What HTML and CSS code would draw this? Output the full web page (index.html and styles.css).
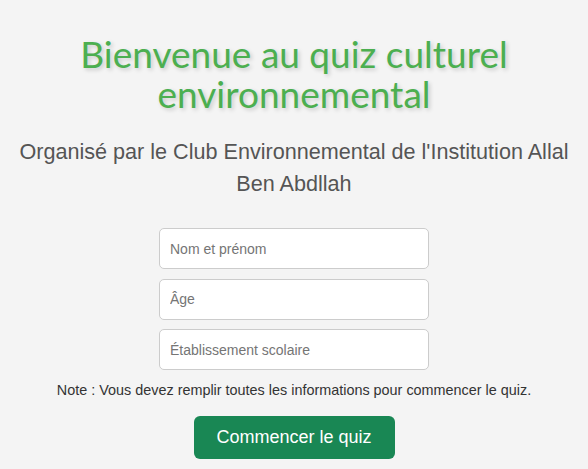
FILE: index.html
```html
<!DOCTYPE html>
<html lang="fr">
<head>
<meta charset="utf-8">
<title>Quiz culturel environnemental</title>
<link rel="stylesheet" href="styles.css">
</head>
<body>
<main class="page">
  <h1 class="title">Bienvenue au quiz culturel environnemental</h1>
  <p class="subtitle">Organisé par le Club Environnemental de l'Institution Allal Ben Abdllah</p>
  <form class="form">
    <input class="field" type="text" placeholder="Nom et prénom">
    <input class="field" type="text" placeholder="Âge">
    <input class="field" type="text" placeholder="Établissement scolaire">
    <p class="note">Note : Vous devez remplir toutes les informations pour commencer le quiz.</p>
    <button class="start" type="button">Commencer le quiz</button>
  </form>
</main>
</body>
</html>
```

FILE: styles.css
```css
html, body {
  margin: 0;
  padding: 0;
  background: #f4f4f4;
}
body {
  font-family: "Liberation Sans", Arial, sans-serif;
  color: #333;
}
.page {
  display: flex;
  flex-direction: column;
  align-items: center;
  padding: 34px 8px 0;
  text-align: center;
}
.title {
  margin: 0;
  font-family: Lato, "Open Sans", sans-serif;
  font-weight: 400;
  font-size: 37px;
  line-height: 40px;
  color: #4caf50;
  text-shadow: 2px 2px 4px rgba(0, 0, 0, 0.18);
  max-width: 470px;
}
.subtitle {
  margin: 22px 0 0;
  font-size: 21.6px;
  line-height: 32px;
  color: #555;
}
.form {
  display: flex;
  flex-direction: column;
  align-items: center;
  margin-top: 28px;
}
.field {
  box-sizing: border-box;
  width: 270px;
  height: 41px;
  margin: 0 0 9.5px;
  padding: 0 10px;
  border: 1px solid #ccc;
  border-radius: 5px;
  background: #fff;
  font-family: "Liberation Sans", Arial, sans-serif;
  font-size: 14px;
  color: #333;
}
.field::placeholder {
  color: #757575;
}
.note {
  margin: 1px 0 0;
  font-size: 14.4px;
  line-height: 18px;
  color: #333;
}
.start {
  margin-top: 17px;
  width: 201px;
  height: 43px;
  border: none;
  border-radius: 6px;
  background: #198754;
  color: #fff;
  font-family: "Liberation Sans", Arial, sans-serif;
  font-size: 18px;
}
```
